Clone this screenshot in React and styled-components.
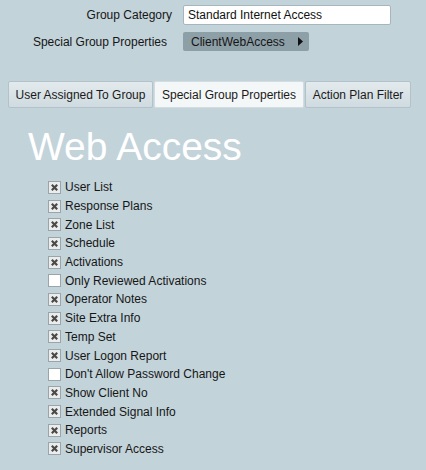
import React from 'react';
import styled, { createGlobalStyle } from 'styled-components';

const Global = createGlobalStyle`
  html, body {
    margin: 0;
    padding: 0;
    background: #c3d3da;
  }
  body {
    font-family: "Liberation Sans", Arial, sans-serif;
    font-size: 12px;
    color: #161616;
  }
`;

const Page = styled.div`
  width: 426px;
  height: 470px;
  padding-top: 5px;
  box-sizing: border-box;
`;

const Form = styled.div`
  display: grid;
  grid-template-columns: 172px 208px;
  column-gap: 11px;
  row-gap: 7px;
  align-items: center;
`;

const Label = styled.div`
  text-align: right;
  padding-right: ${p => p.$pad || 0}px;
  font-size: 12px;
`;

const TextInput = styled.div`
  height: 20px;
  box-sizing: border-box;
  background: #fff;
  border: 1px solid #a7b6bd;
  border-radius: 2px;
  padding: 0 4px;
  display: flex;
  align-items: center;
  color: #111;
`;

const DropButton = styled.div`
  width: 126px;
  height: 19px;
  box-sizing: border-box;
  background: #8d9fa7;
  border-radius: 2px;
  padding: 0 6px 0 8px;
  display: flex;
  align-items: center;
  justify-content: space-between;
  color: #151515;
`;

const Tabs = styled.div`
  display: flex;
  gap: 1px;
  margin: 30px 0 0 8px;
`;

const Tab = styled.div`
  width: ${p => p.$w}px;
  height: 27px;
  box-sizing: border-box;
  display: flex;
  align-items: center;
  justify-content: center;
  border: 1px solid ${p => (p.$active ? '#d3dde1' : '#b3c2c9')};
  border-radius: 2px;
  background: ${p => (p.$active ? '#f4f7f8' : 'linear-gradient(#e3eaed, #cfdbe0)')};
  color: #1a1a1a;
  white-space: nowrap;
`;

const Heading = styled.h1`
  margin: 19px 0 0 28px;
  font-size: 39px;
  line-height: 39px;
  font-weight: normal;
  color: #ffffff;
`;

const List = styled.div`
  margin: 12px 0 0 48px;
  display: flex;
  flex-direction: column;
`;

const Row = styled.div`
  height: 18.7px;
  display: flex;
  align-items: center;
  gap: 4px;
`;

const Box = styled.div`
  width: 13px;
  height: 13px;
  box-sizing: border-box;
  border: 1px solid #9aa5aa;
  background: ${p => (p.$checked ? '#ececec' : '#ffffff')};
  display: flex;
  align-items: center;
  justify-content: center;
`;

const items = [
  ['User List', true],
  ['Response Plans', true],
  ['Zone List', true],
  ['Schedule', true],
  ['Activations', true],
  ['Only Reviewed Activations', false],
  ['Operator Notes', true],
  ['Site Extra Info', true],
  ['Temp Set', true],
  ['User Logon Report', true],
  ["Don't Allow Password Change", false],
  ['Show Client No', true],
  ['Extended Signal Info', true],
  ['Reports', true],
  ['Supervisor Access', true],
];

const Check = ({ checked }) => (
  <Box $checked={checked}>
    {checked && (
      <svg width="7" height="7" viewBox="0 0 7 7">
        <path d="M0.8 0.8 L6.2 6.2 M6.2 0.8 L0.8 6.2" stroke="#4a4a4a" strokeWidth="2.2" />
      </svg>
    )}
  </Box>
);

export default function App() {
  return (
    <Page>
      <Global />
      <Form>
        <Label>Group Category</Label>
        <TextInput>Standard Internet Access</TextInput>
        <Label $pad={5}>Special Group Properties</Label>
        <DropButton>
          <span>ClientWebAccess</span>
          <svg width="5" height="9" viewBox="0 0 5 9">
            <path d="M0 0 L5 4.5 L0 9 Z" fill="#111" />
          </svg>
        </DropButton>
      </Form>
      <Tabs>
        <Tab $w={145}>User Assigned To Group</Tab>
        <Tab $w={150} $active>Special Group Properties</Tab>
        <Tab $w={106}>Action Plan Filter</Tab>
      </Tabs>
      <Heading>Web Access</Heading>
      <List>
        {items.map(([label, checked]) => (
          <Row key={label}>
            <Check checked={checked} />
            <span>{label}</span>
          </Row>
        ))}
      </List>
    </Page>
  );
}
